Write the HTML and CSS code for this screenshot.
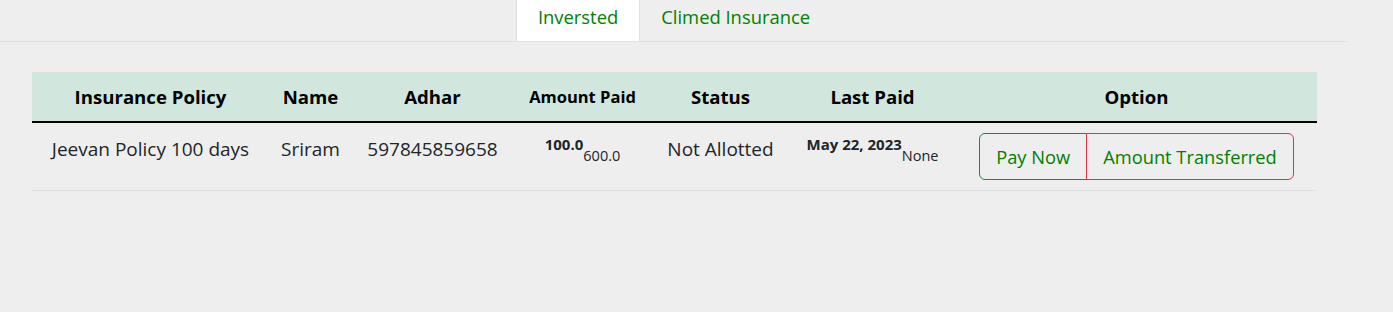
FILE: index.html
```html
<!DOCTYPE html>
<html>
<head>
<meta charset="utf-8">
<link rel="stylesheet" href="styles.css">
</head>
<body>
<div class="page">
  <ul class="tabs">
    <li class="tab active">Inversted</li>
    <li class="tab">Climed Insurance</li>
  </ul>
  <div class="table-wrap">
    <table class="tbl">
      <thead>
        <tr>
          <th class="c1">Insurance Policy</th>
          <th class="c2">Name</th>
          <th class="c3">Adhar</th>
          <th class="c4 small">Amount Paid</th>
          <th class="c5">Status</th>
          <th class="c6">Last Paid</th>
          <th class="c7">Option</th>
        </tr>
      </thead>
      <tbody>
        <tr>
          <td>Jeevan Policy 100 days</td>
          <td>Sriram</td>
          <td>597845859658</td>
          <td class="amt"><b class="sup">100.0</b><span class="sub">600.0</span></td>
          <td>Not Allotted</td>
          <td class="amt"><b class="sup">May 22, 2023</b><span class="sub">None</span></td>
          <td class="opt">
            <div class="btn-group">
              <button class="btn btn-green">Pay Now</button><button class="btn btn-red">Amount Transferred</button>
            </div>
          </td>
        </tr>
      </tbody>
    </table>
  </div>
</div>
</body>
</html>
```

FILE: styles.css
```css
* { box-sizing: border-box; }
body {
  margin: 0;
  background: #eeeeee;
  font-family: "Open Sans", sans-serif;
  color: #212529;
}
.page { width: 1347px; }
.tabs {
  list-style: none;
  margin: 0;
  padding: 0;
  display: flex;
  justify-content: center;
  border-bottom: 1px solid #dee2e6;
  height: 42px;
}
.tab {
  color: #008000;
  font-size: 18.4px;
  padding: 0 21px;
  line-height: 34px;
  height: 41px;
}
.tab.active {
  background: #ffffff;
  border-left: 1px solid #dee2e6;
  border-right: 1px solid #dee2e6;
}
.table-wrap { padding: 30px 0 0 32px; }
.tbl {
  border-collapse: collapse;
  width: 1285px;
  table-layout: fixed;
}
.tbl th {
  background: #d1e7dd;
  color: #000;
  font-weight: 700;
  font-size: 18.6px;
  height: 50px;
  text-align: center;
  border-bottom: 2px solid #000;
  padding: 0 8px;
}
.tbl th.small { font-size: 16.5px; }
.c1 { width: 237px; }
.c2 { width: 83px; }
.c3 { width: 161px; }
.c4 { width: 139px; }
.c5 { width: 137px; }
.c6 { width: 167px; }
.c7 { width: 361px; }
.tbl td {
  font-size: 19px;
  line-height: 26px;
  text-align: center;
  padding: 13px 8px 0;
  border-bottom: 1px solid #dee2e6;
  vertical-align: top;
}
.tbl td.opt { padding: 10px 8px 10px; }
.amt { white-space: nowrap; }
.sup { font-size: 15px; line-height: 1; font-weight: 700; vertical-align: 6px; }
.sub { font-size: 14.5px; line-height: 1; vertical-align: -5px; }
.btn-group { display: inline-flex; vertical-align: top; }
.btn {
  font-family: inherit;
  font-size: 18.3px;
  color: #008000;
  background: transparent;
  height: 47px;
  padding: 0 16px;
  cursor: pointer;
  border-width: 1px;
  border-style: solid;
}
.btn-green {
  border-color: #198754;
  border-radius: 6px 0 0 6px;
}
.btn-red {
  border-color: #dc3545;
  margin-left: -1px;
  border-radius: 0 6px 6px 0;
}
```
